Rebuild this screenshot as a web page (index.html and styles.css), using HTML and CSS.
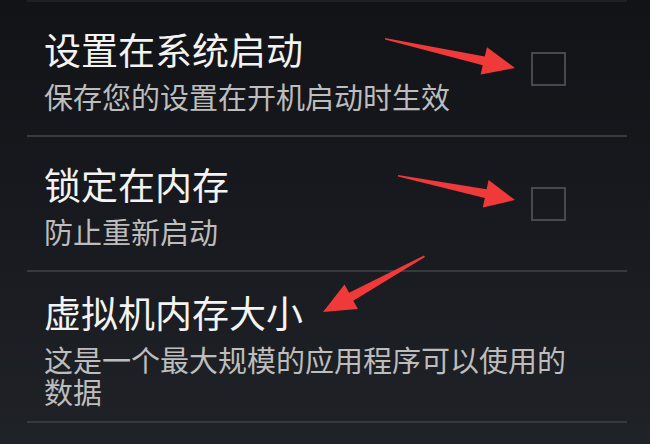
FILE: index.html
```html
<!DOCTYPE html>
<html lang="zh-CN">
<head>
<meta charset="utf-8">
<title>设置</title>
<link rel="stylesheet" href="styles.css">
</head>
<body>
<div class="screen">
  <div class="list">
    <div class="row">
      <div class="texts">
        <div class="title">设置在系统启动</div>
        <div class="summary">保存您的设置在开机启动时生效</div>
      </div>
      <div class="checkbox"></div>
    </div>
    <div class="row">
      <div class="texts">
        <div class="title">锁定在内存</div>
        <div class="summary">防止重新启动</div>
      </div>
      <div class="checkbox"></div>
    </div>
    <div class="row tall">
      <div class="texts">
        <div class="title">虚拟机内存大小</div>
        <div class="summary narrow">这是一个最大规模的应用程序可以使用的数据</div>
      </div>
    </div>
  </div>
  <svg class="arrows" width="650" height="444" viewBox="0 0 650 444" aria-hidden="true">
    <polygon points="385,38 484.8,56.4 487,47.2 515,68 480.6,74.5 482.8,65.2 385,39.6"/>
    <polygon points="398,175 486.6,189.3 488.6,180 515,200 482.8,207.4 484.8,198.1 398,176.6"/>
    <polygon points="425,257 353.3,300.8 357.9,309.1 323,312 344.5,284.5 349.1,292.8 424,255.6"/>
  </svg>
</div>
</body>
</html>
```
FILE: styles.css
```css
html, body {
  margin: 0;
  padding: 0;
}
body {
  width: 650px;
  height: 444px;
  overflow: hidden;
  background: linear-gradient(180deg, #121317 0%, #17191e 45%, #1f2227 100%);
  font-family: "Noto Sans CJK SC", "Noto Sans", sans-serif;
}
.screen {
  position: relative;
  width: 650px;
  height: 444px;
}
.list {
  margin-left: 27px;
  width: 600px;
  border-top: 2px solid #1f2125;
}
.row {
  box-sizing: border-box;
  min-height: 135px;
  display: flex;
  align-items: center;
  justify-content: space-between;
  padding-left: 17px;
  border-bottom: 2px solid #36393e;
}
.row.tall {
  min-height: 0;
  padding-top: 17px;
  padding-bottom: 14px;
}
.texts {
  display: flex;
  flex-direction: column;
}
.title {
  font-size: 37px;
  line-height: 46px;
  color: #f3f3f3;
}
.summary {
  margin-top: 8px;
  font-size: 29px;
  line-height: 32px;
  color: #bdbdbd;
}
.summary.narrow {
  width: 530px;
}
.checkbox {
  box-sizing: border-box;
  width: 35px;
  height: 34px;
  margin-right: 61px;
  border: 2px solid #47494d;
}
.arrows {
  position: absolute;
  left: 0;
  top: 0;
}
.arrows polygon {
  fill: #f03a3a;
}
```
